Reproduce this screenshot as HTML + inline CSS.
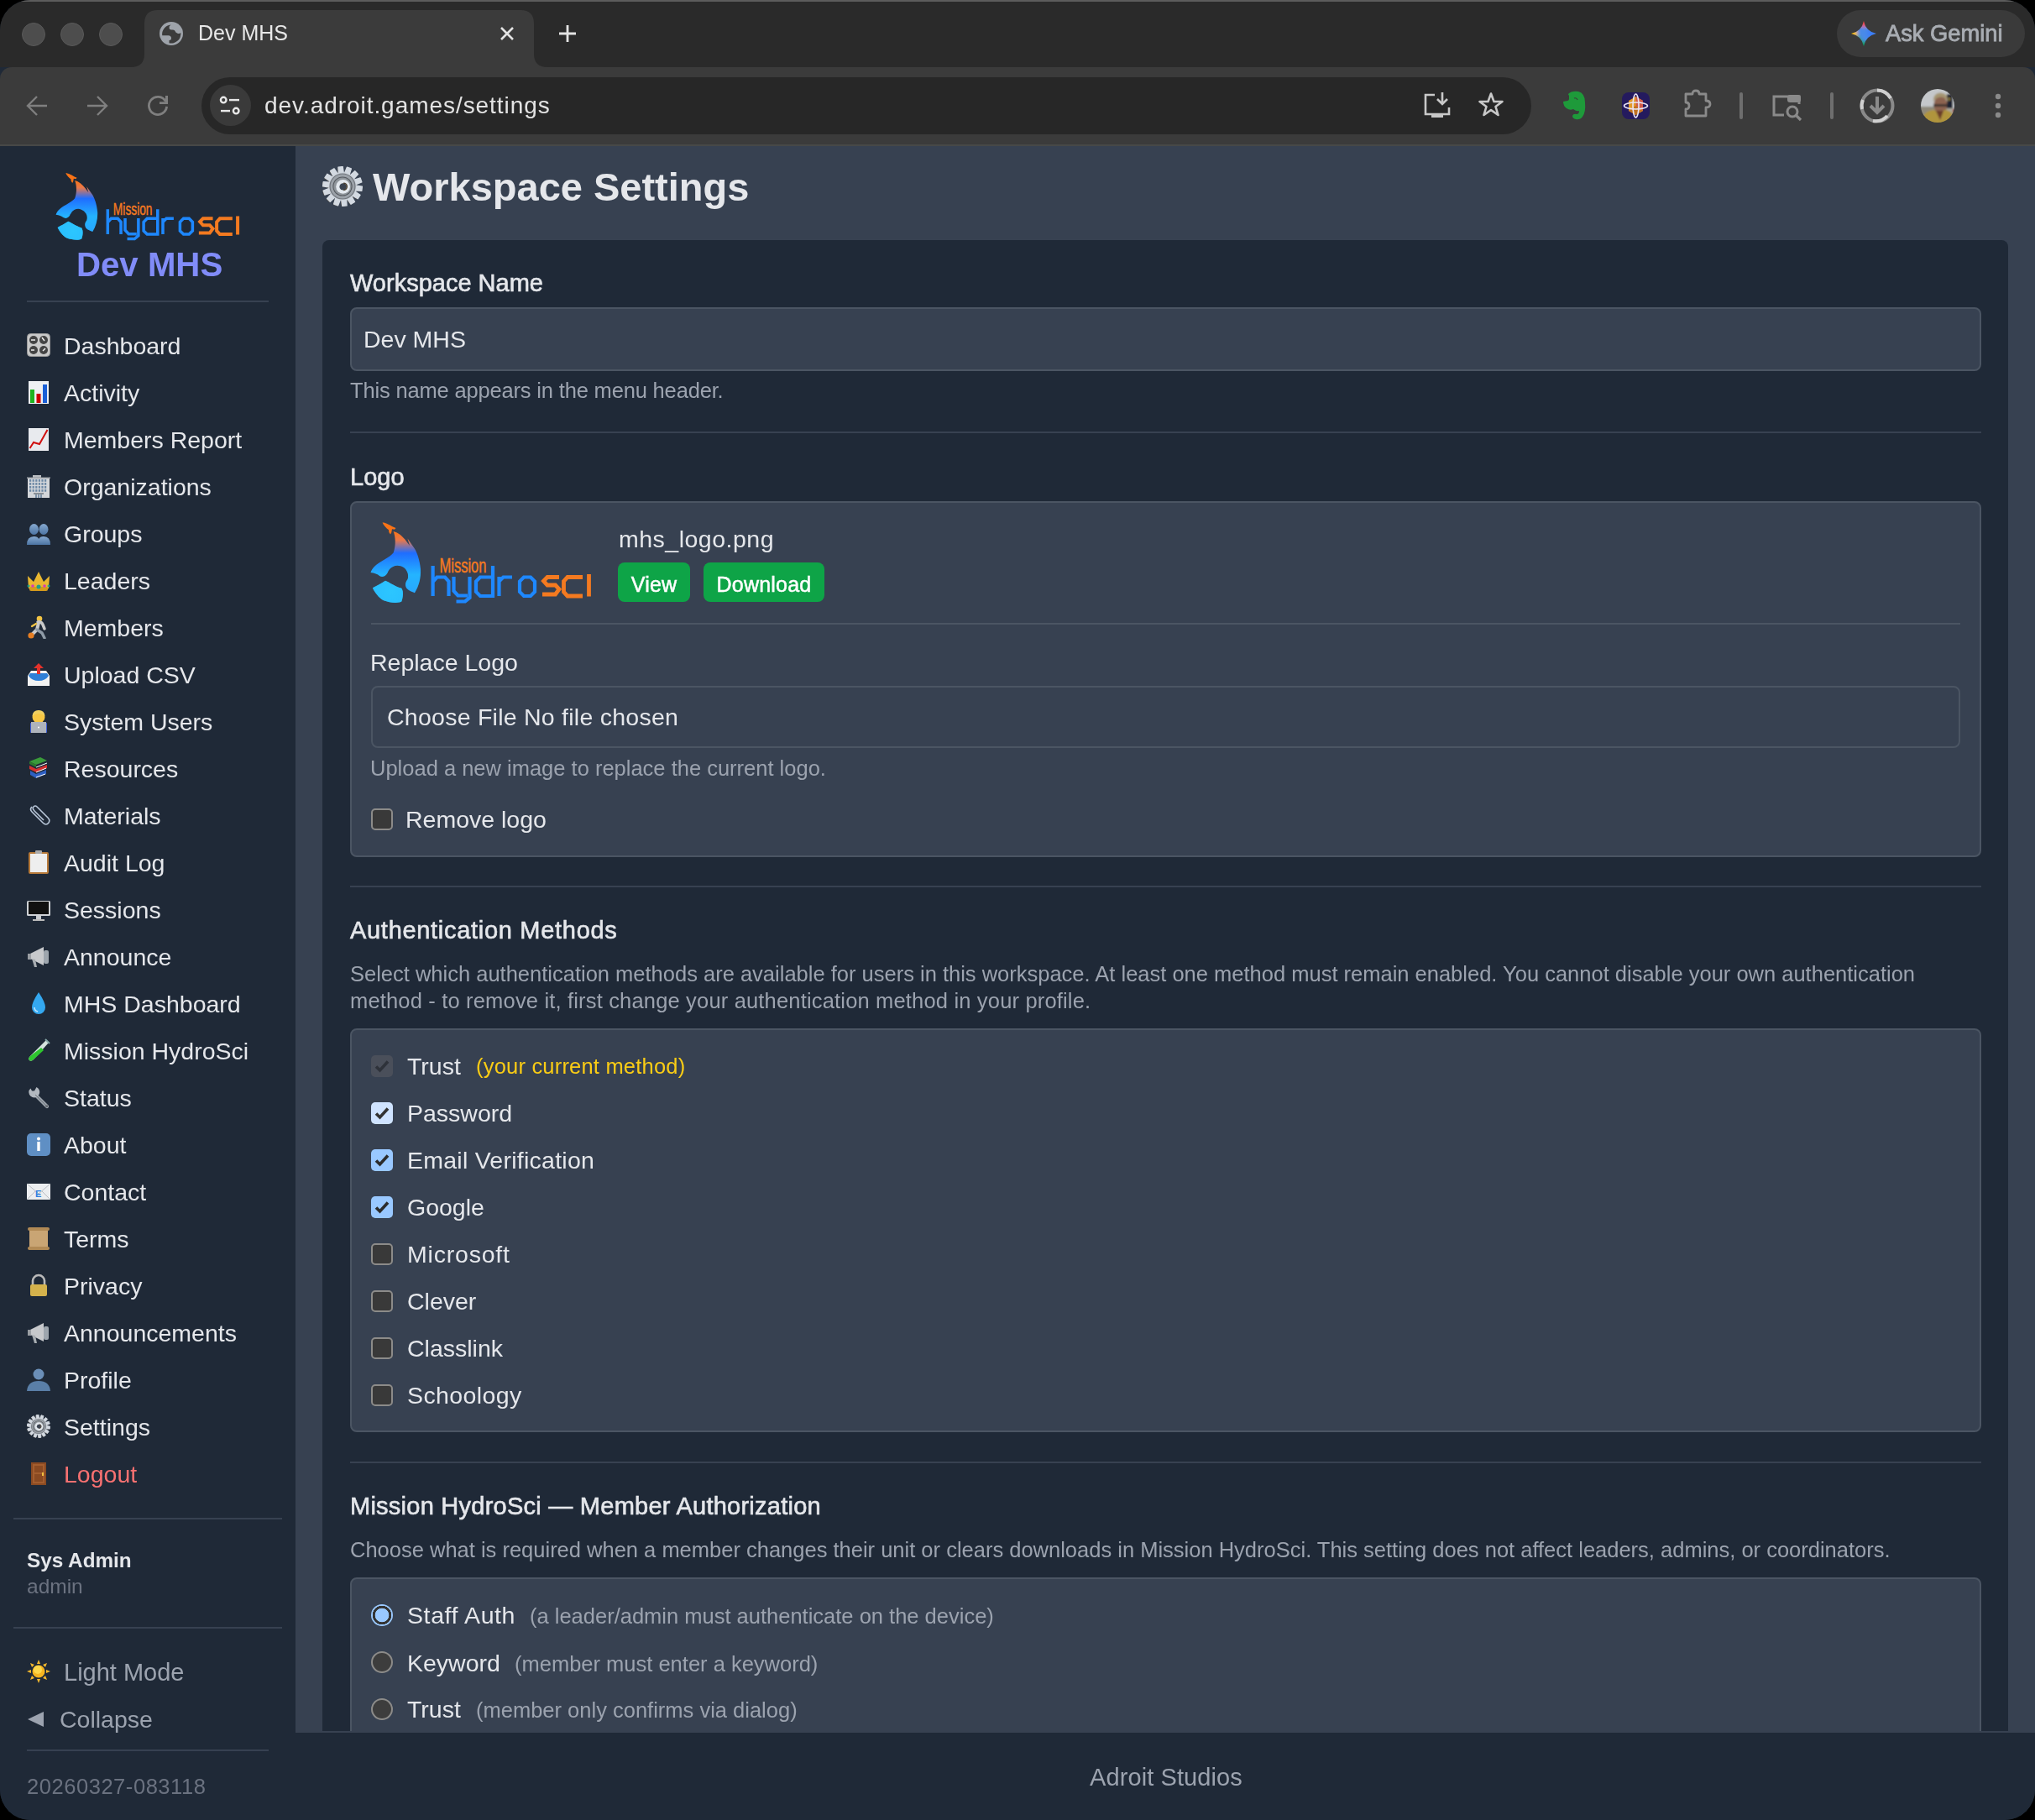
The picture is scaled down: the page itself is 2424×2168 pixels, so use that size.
<!DOCTYPE html>
<html><head><meta charset="utf-8">
<style>
*{box-sizing:border-box}
html,body{margin:0;padding:0}
body{width:2424px;height:2168px;background:#000;overflow:hidden;position:relative;font-family:"Liberation Sans",sans-serif;color:#e5e7eb}
.a{position:absolute}
.t{position:absolute;white-space:nowrap;line-height:1;will-change:transform}
.lbl{font-size:29px;color:#e5e7eb;-webkit-text-stroke:0.6px #e5e7eb}
.tx{font-size:28.5px;color:#e5e7eb}
.hp{font-size:25.5px;color:#9ca3af}
.btn{top:670px;height:47px;background:#0ea447;border-radius:8px;color:#fff;font-size:25px;line-height:52px;letter-spacing:0.2px;text-align:center;-webkit-text-stroke:0.5px #fff;will-change:transform}
.cb{width:26px;height:26px;border-radius:5px;background:#393939;border:2px solid #8c8b89}
.cb svg{position:absolute;left:-2px;top:-2px}
.cb.on{background:#99c8ff;border:none}
.cb.on svg{left:0;top:0}
.cb.lt{background:#cfe3ff}
.cb.dis{background:#4a4f5a;border:none}
.cb.dis svg{left:0;top:0}
.tl{top:27px;width:28px;height:28px;border-radius:50%;background:#4d4d4d;border:1px solid #5a5a5a}
.si{font-size:28.5px}
.rd{width:26px;height:26px;border-radius:50%;background:#3d3d3d;border:2px solid #8c8b89}
.rd.on{background:radial-gradient(circle at 50% 50%,#99c8ff 0,#99c8ff 8px,#333 8.6px,#333 11px,#99c8ff 11.5px);border:none}
#win{position:absolute;left:0;top:0;width:2424px;height:2168px;border-radius:36px;overflow:hidden;background:#1f2937}
</style></head><body>
<div id="win">
  <!-- tab strip -->
  <div class="a" style="left:0;top:0;width:2424px;height:80px;background:#2a2a2a"></div>
  <div class="a" style="left:0;top:0;width:2424px;height:2px;background:#5c5c5c"></div>
  <!-- traffic lights -->
  <div class="a tl" style="left:26px"></div>
  <div class="a tl" style="left:72px"></div>
  <div class="a tl" style="left:118px"></div>
  <!-- active tab -->
  <svg class="a" style="left:156px;top:12px" width="496" height="68" viewBox="0 0 496 68">
    <path d="M0 68 Q16 68 16 52 V16 Q16 0 32 0 H464 Q480 0 480 16 V52 Q480 68 496 68 Z" fill="#3b3b3b"/>
  </svg>
  <svg class="a" style="left:189px;top:25px" width="30" height="30" viewBox="0 0 30 30">
    <circle cx="15" cy="15" r="14" fill="#9ea3aa"/>
    <path d="M4.2 17.3 A11.4 11.4 0 0 1 14.5 4.5 Q12 6 12.5 8.5 Q13 11 16 10.5 Q19 10 19.5 12 Q20 14 23 15 Q25.5 15.5 26.3 13.8 A11.4 11.4 0 0 1 12.5 26.3 L12.5 23 Q15 23 15 20.5 Q15 17.5 11.5 17.2 Z" fill="#3b3b3b"/>
  </svg>
  <div class="t" style="left:236px;top:27px;font-size:25px;color:#e8e8e8">Dev MHS</div>
  <svg class="a" style="left:594px;top:30px" width="20" height="20" viewBox="0 0 20 20"><path d="M3 3 L17 17 M17 3 L3 17" stroke="#e3e3e3" stroke-width="2.6"/></svg>
  <svg class="a" style="left:665px;top:29px" width="22" height="22" viewBox="0 0 22 22"><path d="M11 1 V21 M1 11 H21" stroke="#e3e3e3" stroke-width="2.8"/></svg>
  <!-- toolbar -->
  <div class="a" style="left:0;top:80px;width:2424px;height:92px;background:#3b3b3b;border-radius:14px 14px 0 0"></div>
  <div class="a" style="left:0;top:172px;width:2424px;height:2px;background:#474847"></div>
  <svg class="a" style="left:30px;top:112px" width="180" height="30" viewBox="0 0 180 30">
    <g fill="none" stroke="#7f7f7f" stroke-width="2.4">
      <path d="M26 14 H4 M14 3 L3 14 L14 25"/>
      <path d="M74 14 H96 M86 3 L97 14 L86 25"/>
      <path d="M167.2 8.6 A10.6 10.6 0 1 0 168.6 14.9" stroke-width="2.8"/>
    </g>
    <path d="M167 2 H170 V12 H160 V9.2 H167Z" fill="#7f7f7f"/>
  </svg>
  <!-- url bar -->
  <div class="a" style="left:240px;top:92px;width:1584px;height:68px;border-radius:34px;background:#272727"></div>
  <div class="a" style="left:250px;top:101px;width:49px;height:49px;border-radius:50%;background:#3a3a3a"></div>
  <svg class="a" style="left:258px;top:110px" width="32" height="32" viewBox="0 0 32 32">
    <g fill="none" stroke="#e8e8e8" stroke-width="2.4">
      <circle cx="8.2" cy="9.1" r="3.3"/><path d="M15 9.1 H27"/>
      <circle cx="23.2" cy="22.1" r="3.3"/><path d="M5 22.1 H16"/>
    </g>
  </svg>
  <div class="t" style="left:315px;top:112px;font-size:28px;color:#e3e3e3;letter-spacing:0.95px">dev.adroit.games/settings</div>
  <svg class="a" style="left:1694px;top:108px" width="100" height="36" viewBox="0 0 100 36">
    <g fill="none" stroke="#c8c8c8" stroke-width="2.6">
      <path d="M15 5 H4 V28 H32 V20"/>
      <path d="M24 2 V16 M18 10 L24 16 L30 10"/>
    </g>
    <rect x="11" y="28" width="14" height="4" fill="#c8c8c8"/>
    <path d="M82 3.5 L85.5 13 H95.5 L87.5 19 L90.5 29 L82 23 L73.5 29 L76.5 19 L68.5 13 H78.5 Z" fill="none" stroke="#c8c8c8" stroke-width="2.6" stroke-linejoin="round"/>
  </svg>
  <!-- extension icons -->
  <svg class="a" style="left:1860px;top:108px" width="32" height="36" viewBox="0 0 32 36">
    <path d="M8 4 Q12 0 20 1 Q28 3 28 14 Q29 26 25 31 Q22 35 17 34 Q13 33 13 30 Q14 27 18 28 Q21 28 21 24 Q18 25 14 22 Q10 24 6 21 Q2 18 2 13 L7 12 Q9 12 9 9Z" fill="#1e9a3a"/>
    <path d="M4 10 H9 V5" fill="#3b3b3b"/>
    <path d="M15 9 Q18 8 19 11" stroke="#3b3b3b" stroke-width="1.2" fill="none"/>
  </svg>
  <svg class="a" style="left:1932px;top:110px" width="33" height="32" viewBox="0 0 33 32">
    <rect x="0" y="0" width="33" height="32" rx="8" fill="#241a5e"/>
    <path d="M16.5 5 L25 10 V22 L16.5 27 L8 22 V10Z" fill="#e39a2a"/>
    <path d="M16.5 5 L25 10 V22 L16.5 16Z" fill="#d25a4a"/>
    <path d="M8 22 L16.5 16 L25 22 L16.5 27Z" fill="#c07020"/>
    <ellipse cx="16.5" cy="16" rx="14" ry="4" fill="none" stroke="#e9e4f5" stroke-width="1.6"/>
    <ellipse cx="16.5" cy="16" rx="3.5" ry="14" fill="none" stroke="#e9e4f5" stroke-width="1.6"/>
  </svg>
  <svg class="a" style="left:2004px;top:106px" width="36" height="36" viewBox="0 0 36 36">
    <path d="M4 6 H12 Q12 2 16 2 Q20 2 20 6 H28 V14 Q33 14 33 18 Q33 22 28 22 V32 H4 V24 Q8 24 8 20 Q8 16 4 16 Z" fill="none" stroke="#8a8a8a" stroke-width="2.8" stroke-linejoin="round"/>
  </svg>
  <div class="a" style="left:2072px;top:110px;width:4px;height:32px;border-radius:2px;background:#6e6e6e"></div>
  <svg class="a" style="left:2109px;top:110px" width="40" height="36" viewBox="0 0 40 36">
    <path d="M16 27 H4 V5 H34 V14" fill="none" stroke="#8a8a8a" stroke-width="3"/>
    <rect x="20" y="3" width="16" height="9" rx="3" fill="#8a8a8a"/>
    <circle cx="26" cy="23" r="6" fill="none" stroke="#8a8a8a" stroke-width="3"/>
    <path d="M30 27 L36 33" stroke="#8a8a8a" stroke-width="3.2"/>
  </svg>
  <div class="a" style="left:2180px;top:110px;width:4px;height:32px;border-radius:2px;background:#6e6e6e"></div>
  <svg class="a" style="left:2214px;top:104px" width="44" height="44" viewBox="0 0 44 44">
    <circle cx="22" cy="22" r="18.5" fill="none" stroke="#8a8a8a" stroke-width="4"/>
    <path d="M22 3.5 A18.5 18.5 0 0 1 38 13" fill="none" stroke="#d0d0d0" stroke-width="4"/>
    <path d="M34 34 A18.5 18.5 0 0 1 17 40" fill="none" stroke="#d0d0d0" stroke-width="4"/>
    <path d="M4 26 A18.5 18.5 0 0 1 5 15" fill="none" stroke="#d0d0d0" stroke-width="4"/>
    <path d="M22 11 V29 M14 22 L22 30 L30 22" fill="none" stroke="#8a8a8a" stroke-width="4"/>
  </svg>
  <svg class="a" style="left:2288px;top:106px" width="40" height="40" viewBox="0 0 40 40">
    <defs><clipPath id="av"><circle cx="20" cy="20" r="20"/></clipPath><filter id="avb" x="-10%" y="-10%" width="120%" height="120%"><feGaussianBlur stdDeviation="0.9"/></filter></defs>
    <g clip-path="url(#av)"><g filter="url(#avb)">
      <rect x="-2" y="-2" width="44" height="44" fill="#c5c8cb"/>
      <rect x="-2" y="21" width="20" height="10" fill="#8f8a7c"/>
      <rect x="30" y="23" width="12" height="8" fill="#a9a69c"/>
      <rect x="31" y="6" width="7" height="17" fill="#1e2430"/>
      <rect x="33" y="10" width="2" height="4" fill="#8a7a30"/>
      <rect x="38" y="24" width="4" height="4" fill="#a03030"/>
      <ellipse cx="23.5" cy="19" rx="8" ry="11" fill="#8c6350"/>
      <path d="M14.5 15 Q15 4 24 4.5 Q33 5 32 16 Q30 10 24 9.5 Q18 10 14.5 15Z" fill="#a59672"/>
      <path d="M15 18 H32 V21 H15Z" fill="#2c2a2a" opacity="0.8"/>
      <path d="M-2 42 Q2 27 14 25 Q19 24 22 34 Q25 24 30 25 Q40 27 42 42Z" fill="#b0953e"/>
      <path d="M18 26 L23 37 L27 26Z" fill="#6b3c2c"/>
    </g></g>
  </svg>
  <svg class="a" style="left:2375px;top:111px" width="10" height="30" viewBox="0 0 10 30">
    <circle cx="5" cy="4" r="3.2" fill="#8a8a8a"/><circle cx="5" cy="15" r="3.2" fill="#8a8a8a"/><circle cx="5" cy="26" r="3.2" fill="#8a8a8a"/>
  </svg>
  <!-- gemini -->
  <div class="a" style="left:2188px;top:12px;width:224px;height:56px;border-radius:28px;background:#3a3a3a"></div>
  <svg class="a" style="left:2204px;top:24px" width="32" height="32" viewBox="0 0 32 32">
    <defs><clipPath id="gsc"><path d="M16 1 Q18.5 13.5 31 16 Q18.5 18.5 16 31 Q13.5 18.5 1 16 Q13.5 13.5 16 1Z"/></clipPath>
    <filter id="gbl" x="-20%" y="-20%" width="140%" height="140%"><feGaussianBlur stdDeviation="2.2"/></filter></defs>
    <g clip-path="url(#gsc)"><g filter="url(#gbl)">
      <rect x="0" y="0" width="32" height="32" fill="#4a8ae8"/>
      <circle cx="16" cy="1" r="7" fill="#f2453d"/>
      <circle cx="1" cy="16" r="7.5" fill="#fbbc04"/>
      <circle cx="8" cy="24" r="5" fill="#34a853"/>
      <circle cx="16" cy="31" r="6" fill="#0f9d58"/>
      <circle cx="28" cy="16" r="8" fill="#3d7ef5"/>
    </g></g>
  </svg>
  <div class="t" style="left:2246px;top:25.5px;font-size:27.3px;color:#a9adb3;-webkit-text-stroke:0.8px #a9adb3">Ask Gemini</div>

  <!-- sidebar -->
  <div class="a" style="left:0;top:174px;width:352px;height:1994px;background:#1f2937"></div>
  <svg class="a" style="left:62.2px;top:199.8px" width="228.2" height="91.6" viewBox="0 0 274 110"><defs><linearGradient id="flgs" x1="0" y1="18" x2="0" y2="104" gradientUnits="userSpaceOnUse"><stop offset="0" stop-color="#f97316"/><stop offset="0.12" stop-color="#e9784a"/><stop offset="0.3" stop-color="#1f6dff"/><stop offset="0.6" stop-color="#24b4ff"/><stop offset="1" stop-color="#2aa0ff"/></linearGradient>
<radialGradient id="flrs" cx="30" cy="90" r="40" gradientUnits="userSpaceOnUse"><stop offset="0" stop-color="#2cc6ff"/><stop offset="1" stop-color="#2cc6ff" stop-opacity="0"/></radialGradient></defs>
<path d="M19.5 7.5 C22 7 28 10 32 12.5 L35.5 14 L34 15.8 L31 15.2 L30.2 19.5 L29 21.5 L27.3 19 L27 16.3 C24 14 21 11 19.5 7.5 Z" fill="#f97316"/>
<path d="M32.6 18 C35 24 36 34 32.6 43.5 C28 49 18 53 12 58 C8 61 6 65 5.5 67 C10 67.5 14 69 16 71 C19 73 23 72 25.6 67.5 A12 12 0 0 1 49.5 75 C47 78 46 82 48.3 85.8 C51 89 55 90 58 91.2 C63 83 65.5 74 65 63 C64 52 61 44 58 38.7 L49.5 26.6 L52 35 C47 28 42 22 36.3 19.3 Z" fill="url(#flgs)"/>
<path d="M7.9 85.2 C12 83 18 80 23 76.7 C27 78 33 83 42.3 85.8 C45 90 44 97 42.3 101.5 C38 104 28 103 21 100.3 C15 97 10 90 7.9 85.2 Z" fill="#27b8ff"/>
<path d="M7.9 85.2 C12 83 18 80 23 76.7 C27 78 33 83 42.3 85.8 C45 90 44 97 42.3 101.5 C38 104 28 103 21 100.3 C15 97 10 90 7.9 85.2 Z" fill="url(#flrs)"/>
<text x="87.5" y="67.3" font-family="Liberation Sans" font-size="24.5" fill="#f47a20" stroke="#f47a20" stroke-width="0.5" textLength="56" lengthAdjust="spacingAndGlyphs">Mission</text>
<g fill="none" stroke="#1e88ff" stroke-width="4.2" stroke-linejoin="miter">
<path d="M79.6 59 V95 M79.6 78 L84.5 72.5 H94 L98.5 77.5 V95"/>
<path d="M104.5 72 V89 L109.5 94.5 H121 M123.5 72 V97 L118 101.5 H107.5"/>
<path d="M151 59 V95 H136 L131 90 V77.5 L136 72.5 H151"/>
<path d="M158.5 72 V95 M158.5 77.5 L163.5 72.5 H174"/>
<path d="M188 72.5 H196 L201 77.5 V90 L196 95 H188 L183 90 V77.5 Z"/>
</g>
<g fill="none" stroke="#f47a20" stroke-width="4.8" stroke-linejoin="miter">
<path d="M230 72.5 H216 L211.5 77 L216 82 H225.5 L230 87 L225.5 93 H210"/>
<path d="M258 72.5 H240 L235.5 77.5 V90 L240 95 H258"/>
<path d="M265.5 69 V95.5"/>
</g></svg>
  <div class="t" style="left:91px;top:296px;font-size:40.2px;font-weight:bold;color:#818cf8">Dev MHS</div>
  <div class="a" style="left:32px;top:358px;width:288px;height:2px;background:#374151"></div>
  <svg class="a" style="left:32px;top:397px" width="28" height="28" viewBox="0 0 28 28"><rect x="0.5" y="0.5" width="27" height="27" rx="4" fill="#c9c9c9" stroke="#9a9a9a"/><circle cx="8" cy="8" r="5" fill="#444"/><circle cx="20" cy="8" r="5" fill="#444"/><circle cx="8" cy="20" r="5" fill="#444"/><circle cx="20" cy="20" r="5" fill="#444"/><path d="M5 8h5M18 5l3 4M5 20h4M19 21l3-3" stroke="#eee" stroke-width="1.5"/></svg>
  <div class="t si" style="left:76px;top:397.7px;color:#e5e7eb">Dashboard</div>
  <svg class="a" style="left:32px;top:453px" width="28" height="28" viewBox="0 0 28 28"><rect x="2" y="1" width="24" height="27" fill="#eef0f3"/><rect x="4" y="11" width="5" height="16" fill="#1fb41f"/><rect x="11.5" y="16" width="5" height="11" fill="#c00"/><rect x="19" y="5" width="5" height="22" fill="#1a5fd6"/></svg>
  <div class="t si" style="left:76px;top:453.7px;color:#e5e7eb">Activity</div>
  <svg class="a" style="left:32px;top:509px" width="28" height="28" viewBox="0 0 28 28"><rect x="2" y="1" width="24" height="27" fill="#e8eaee"/><path d="M3.5 25 L8 18 L15 20 L24.5 3" fill="none" stroke="#d01010" stroke-width="2"/></svg>
  <div class="t si" style="left:76px;top:509.7px;color:#e5e7eb">Members Report</div>
  <svg class="a" style="left:32px;top:565px" width="28" height="28" viewBox="0 0 28 28"><rect x="1" y="4" width="26" height="24" fill="#d3d6da"/><rect x="7" y="1" width="10" height="3" fill="#b9bcc0"/><rect x="0" y="3.5" width="28" height="1.5" fill="#9da2a8"/><g fill="#6f8aa6"><rect x="3.0" y="6" width="2.2" height="2.8"/><rect x="6.6" y="6" width="2.2" height="2.8"/><rect x="10.2" y="6" width="2.2" height="2.8"/><rect x="13.8" y="6" width="2.2" height="2.8"/><rect x="17.4" y="6" width="2.2" height="2.8"/><rect x="21.0" y="6" width="2.2" height="2.8"/><rect x="3.0" y="10" width="2.2" height="2.8"/><rect x="6.6" y="10" width="2.2" height="2.8"/><rect x="10.2" y="10" width="2.2" height="2.8"/><rect x="13.8" y="10" width="2.2" height="2.8"/><rect x="17.4" y="10" width="2.2" height="2.8"/><rect x="21.0" y="10" width="2.2" height="2.8"/><rect x="3.0" y="14" width="2.2" height="2.8"/><rect x="6.6" y="14" width="2.2" height="2.8"/><rect x="10.2" y="14" width="2.2" height="2.8"/><rect x="13.8" y="14" width="2.2" height="2.8"/><rect x="17.4" y="14" width="2.2" height="2.8"/><rect x="21.0" y="14" width="2.2" height="2.8"/><rect x="3.0" y="18" width="2.2" height="2.8"/><rect x="6.6" y="18" width="2.2" height="2.8"/><rect x="10.2" y="18" width="2.2" height="2.8"/><rect x="13.8" y="18" width="2.2" height="2.8"/><rect x="17.4" y="18" width="2.2" height="2.8"/><rect x="21.0" y="18" width="2.2" height="2.8"/></g><rect x="8" y="22" width="12" height="2" fill="#8a9097"/><g fill="#7d93aa"><rect x="10" y="24" width="2" height="4"/><rect x="13" y="24" width="2" height="4"/><rect x="16" y="24" width="2" height="4"/></g></svg>
  <div class="t si" style="left:76px;top:565.7px;color:#e5e7eb">Organizations</div>
  <svg class="a" style="left:32px;top:621px" width="28" height="28" viewBox="0 0 28 28"><defs><linearGradient id="gpg" x1="0" y1="0" x2="0" y2="1"><stop offset="0" stop-color="#86a9d0"/><stop offset="1" stop-color="#4c74a3"/></linearGradient></defs><g fill="url(#gpg)"><ellipse cx="8.5" cy="9.5" rx="5.5" ry="6.5"/><ellipse cx="20" cy="9.5" rx="5.5" ry="6.5"/><path d="M0 28 Q0 18 8.5 18 Q13 18 14.2 21 Q15.5 18 20 18 Q28 18 28 28Z"/></g></svg>
  <div class="t si" style="left:76px;top:621.7px;color:#e5e7eb">Groups</div>
  <svg class="a" style="left:32px;top:677px" width="28" height="28" viewBox="0 0 28 28"><path d="M2 24 L1 9 L8 16 L14 4 L20 16 L27 9 L26 24Z" fill="#e9b730"/><rect x="3" y="22" width="22" height="5" rx="2" fill="#d49a1c"/><circle cx="14" cy="22" r="2.5" fill="#1ea087"/><circle cx="7" cy="21" r="1.8" fill="#d63ab8"/><circle cx="21" cy="21" r="1.8" fill="#d63ab8"/><circle cx="2" cy="21" r="1.5" fill="#1ea087"/><circle cx="26" cy="21" r="1.5" fill="#1ea087"/></svg>
  <div class="t si" style="left:76px;top:677.7px;color:#e5e7eb">Leaders</div>
  <svg class="a" style="left:32px;top:733px" width="28" height="28" viewBox="0 0 28 28"><circle cx="15" cy="4" r="3.3" fill="#f2c445"/><path d="M13 8 Q17 7 19 11 L21 16" stroke="#c9c9c9" stroke-width="3.5" fill="none" stroke-linecap="round"/><path d="M14 9 L12 17 L7 22" stroke="#c9c9c9" stroke-width="4" fill="none" stroke-linecap="round"/><path d="M12 17 L18 21 L21 27" stroke="#8e9aa6" stroke-width="3.4" fill="none" stroke-linecap="round"/><path d="M11 10 L6 13" stroke="#f2c445" stroke-width="2.4" stroke-linecap="round"/><circle cx="5" cy="24" r="3.6" fill="#e67e22"/></svg>
  <div class="t si" style="left:76px;top:733.7px;color:#e5e7eb">Members</div>
  <svg class="a" style="left:32px;top:789px" width="28" height="28" viewBox="0 0 28 28"><path d="M1 16 L5 10 H23 L27 16 V28 H1Z" fill="#f2f2f2"/><path d="M4 13 H24 L26 16 Q22 22 14 22 Q6 22 2 16Z" fill="#2f7fd6"/><path d="M14 1 L20 7 H16 V14 H12 V7 H8Z" fill="#e4322b"/></svg>
  <div class="t si" style="left:76px;top:789.7px;color:#e5e7eb">Upload CSV</div>
  <svg class="a" style="left:32px;top:845px" width="28" height="28" viewBox="0 0 28 28"><circle cx="14" cy="9" r="7.5" fill="#f7c743"/><path d="M6.5 8 Q7 1 14 1 Q21 1 21.5 8 Q18 5 14 5 Q10 5 6.5 8Z" fill="#f0d060"/><rect x="4" y="16" width="20" height="12" rx="1" fill="#3b5bd6"/><rect x="5" y="15" width="18" height="13" fill="#aeb3bb"/><circle cx="14" cy="21.5" r="1" fill="#fff"/></svg>
  <div class="t si" style="left:76px;top:845.7px;color:#e5e7eb">System Users</div>
  <svg class="a" style="left:32px;top:901px" width="28" height="28" viewBox="0 0 28 28"><path d="M3 6 L16 1 L24 5 L11 10Z" fill="#3a9a3a"/><path d="M3 6 L11 10 L11 13 L3 9Z" fill="#2c7a2c"/><path d="M3 11 L11 15 L24 10 L24 14 L11 19 L3 15Z" fill="#d43030"/><path d="M4 17 L11 21 L23 16 L23 21 L11 26 L4 22Z" fill="#2e5fc2"/><path d="M11 13 L24 8 M11 19 L23 14 M11 25 L22 21" stroke="#fff" stroke-width="1"/></svg>
  <div class="t si" style="left:76px;top:901.7px;color:#e5e7eb">Resources</div>
  <svg class="a" style="left:32px;top:957px" width="28" height="28" viewBox="0 0 28 28"><path d="M6 4 Q3 7 6 10 L19 23 Q23 27 26 23 Q28 20 25 17 L12 4 Q10 2 8 4 Q6 6 9 9 L20 20" fill="none" stroke="#b8c6d8" stroke-width="1.6"/></svg>
  <div class="t si" style="left:76px;top:957.7px;color:#e5e7eb">Materials</div>
  <svg class="a" style="left:32px;top:1013px" width="28" height="28" viewBox="0 0 28 28"><rect x="2" y="2" width="24" height="26" rx="2" fill="#b77a3a"/><rect x="4" y="4" width="20" height="22" fill="#eee"/><rect x="10" y="0" width="8" height="4" rx="1" fill="#aaa"/></svg>
  <div class="t si" style="left:76px;top:1013.7px;color:#e5e7eb">Audit Log</div>
  <svg class="a" style="left:32px;top:1069px" width="28" height="28" viewBox="0 0 28 28"><rect x="0" y="4" width="28" height="18" rx="1.5" fill="#cfd2d6"/><rect x="2" y="5" width="24" height="15" fill="#111"/><rect x="11" y="22" width="6" height="4" fill="#c9ccd0"/><rect x="7" y="26" width="14" height="2" fill="#bbb"/></svg>
  <div class="t si" style="left:76px;top:1069.7px;color:#e5e7eb">Sessions</div>
  <svg class="a" style="left:32px;top:1125px" width="28" height="28" viewBox="0 0 28 28"><path d="M2 12 L20 3 V25 L2 16Z" fill="#c7c9cc"/><rect x="1" y="11" width="4" height="7" fill="#9a9ea3"/><rect x="20" y="7" width="6" height="16" rx="2" fill="#9ea6ae"/><path d="M6 17 L9 27 H12 L10 18" fill="#a8adb2"/></svg>
  <div class="t si" style="left:76px;top:1125.7px;color:#e5e7eb">Announce</div>
  <svg class="a" style="left:32px;top:1181px" width="28" height="28" viewBox="0 0 28 28"><path d="M14 1 Q22 13 22 19 A8 8 0 0 1 6 19 Q6 13 14 1Z" fill="#34a8f0"/><path d="M9 19 Q9 23 13 24" stroke="#bfe6ff" stroke-width="1.6" fill="none"/></svg>
  <div class="t si" style="left:76px;top:1181.7px;color:#e5e7eb">MHS Dashboard</div>
  <svg class="a" style="left:32px;top:1237px" width="28" height="28" viewBox="0 0 28 28"><path d="M23 2 L26 5 L8 25 Q5 28 3 26 Q1 24 4 21Z" fill="#d6e3df"/><path d="M17 11 L20 14 L8 25 Q5 28 3 26 Q1 24 4 21Z" fill="#2ec52e"/><path d="M22 1 L27 6" stroke="#8aa" stroke-width="2"/></svg>
  <div class="t si" style="left:76px;top:1237.7px;color:#e5e7eb">Mission HydroSci</div>
  <svg class="a" style="left:32px;top:1293px" width="28" height="28" viewBox="0 0 28 28"><path d="M8.5 9.5 L24 25" stroke="#9aa1a9" stroke-width="4.2" stroke-linecap="round"/><path d="M2.5 6 A6.5 6.5 0 1 0 11.5 2 L9 6.5 L6 6.5 L4.5 3.5 Z" fill="#b3b9c0"/><circle cx="23.6" cy="24.6" r="1.2" fill="#3b3f45"/><path d="M10 11 L24 25" stroke="#6f767e" stroke-width="1"/></svg>
  <div class="t si" style="left:76px;top:1293.7px;color:#e5e7eb">Status</div>
  <svg class="a" style="left:32px;top:1349px" width="28" height="28" viewBox="0 0 28 28"><rect x="0" y="1" width="28" height="27" rx="5" fill="#5f8fc4"/><circle cx="14" cy="7.5" r="2" fill="#fff"/><rect x="12.3" y="11" width="3.4" height="11" fill="#fff"/></svg>
  <div class="t si" style="left:76px;top:1349.7px;color:#e5e7eb">About</div>
  <svg class="a" style="left:32px;top:1405px" width="28" height="28" viewBox="0 0 28 28"><rect x="0" y="5" width="28" height="19" fill="#eceef0"/><path d="M0 5 L14 17 L28 5 M0 24 L10 14 M28 24 L18 14" stroke="#b9bdc2" stroke-width="1" fill="none"/><text x="10" y="21" font-size="11" font-weight="bold" font-family="Liberation Sans" fill="#2c7ee0">E</text></svg>
  <div class="t si" style="left:76px;top:1405.7px;color:#e5e7eb">Contact</div>
  <svg class="a" style="left:32px;top:1461px" width="28" height="28" viewBox="0 0 28 28"><rect x="3" y="2" width="22" height="24" fill="#c9a574"/><rect x="1" y="1" width="26" height="4" rx="2" fill="#b18a55"/><rect x="1" y="24" width="26" height="4" rx="2" fill="#b18a55"/></svg>
  <div class="t si" style="left:76px;top:1461.7px;color:#e5e7eb">Terms</div>
  <svg class="a" style="left:32px;top:1517px" width="28" height="28" viewBox="0 0 28 28"><path d="M7 14 V9 A7 7 0 0 1 21 9 V14" fill="none" stroke="#b9b9b9" stroke-width="2.6"/><rect x="4" y="13" width="20" height="14" rx="2" fill="#d4b24c"/></svg>
  <div class="t si" style="left:76px;top:1517.7px;color:#e5e7eb">Privacy</div>
  <svg class="a" style="left:32px;top:1573px" width="28" height="28" viewBox="0 0 28 28"><path d="M2 12 L20 3 V25 L2 16Z" fill="#c7c9cc"/><rect x="1" y="11" width="4" height="7" fill="#9a9ea3"/><rect x="20" y="7" width="6" height="16" rx="2" fill="#9ea6ae"/><path d="M6 17 L9 27 H12 L10 18" fill="#a8adb2"/></svg>
  <div class="t si" style="left:76px;top:1573.7px;color:#e5e7eb">Announcements</div>
  <svg class="a" style="left:32px;top:1629px" width="28" height="28" viewBox="0 0 28 28"><circle cx="14" cy="8" r="6.5" fill="#6b8fb8"/><path d="M0 28 Q1 16 14 16 Q27 16 28 28Z" fill="#5a7fa8"/></svg>
  <div class="t si" style="left:76px;top:1629.7px;color:#e5e7eb">Profile</div>
  <svg class="a" style="left:32px;top:1685px" width="28" height="28" viewBox="-24 -24 48 48">
    <path d="M15.46 -1.10 L23.40 0.18 L22.77 5.38 L14.76 4.74 L14.41 5.72 L21.00 10.32 L18.18 14.73 L11.24 10.67 L10.50 11.41 L14.45 18.41 L9.99 21.16 L5.50 14.49 L4.51 14.83 L5.03 22.85 L-0.18 23.40 L-1.34 15.44 L-2.37 15.32 L-5.38 22.77 L-10.32 21.00 L-7.90 13.33 L-8.78 12.77 L-14.73 18.18 L-18.41 14.45 L-12.91 8.58 L-13.45 7.70 L-21.16 9.99 L-22.85 5.03 L-15.35 2.13 L-15.46 1.10 L-23.40 -0.18 L-22.77 -5.38 L-14.76 -4.74 L-14.41 -5.72 L-21.00 -10.32 L-18.18 -14.73 L-11.24 -10.67 L-10.50 -11.41 L-14.45 -18.41 L-9.99 -21.16 L-5.50 -14.49 L-4.51 -14.83 L-5.03 -22.85 L0.18 -23.40 L1.34 -15.44 L2.37 -15.32 L5.38 -22.77 L10.32 -21.00 L7.90 -13.33 L8.78 -12.77 L14.73 -18.18 L18.41 -14.45 L12.91 -8.58 L13.45 -7.70 L21.16 -9.99 L22.85 -5.03 L15.35 -2.13Z" fill="#5f574b" transform="translate(-0.9 0.7)"/>
    <path d="M15.46 -1.10 L23.40 0.18 L22.77 5.38 L14.76 4.74 L14.41 5.72 L21.00 10.32 L18.18 14.73 L11.24 10.67 L10.50 11.41 L14.45 18.41 L9.99 21.16 L5.50 14.49 L4.51 14.83 L5.03 22.85 L-0.18 23.40 L-1.34 15.44 L-2.37 15.32 L-5.38 22.77 L-10.32 21.00 L-7.90 13.33 L-8.78 12.77 L-14.73 18.18 L-18.41 14.45 L-12.91 8.58 L-13.45 7.70 L-21.16 9.99 L-22.85 5.03 L-15.35 2.13 L-15.46 1.10 L-23.40 -0.18 L-22.77 -5.38 L-14.76 -4.74 L-14.41 -5.72 L-21.00 -10.32 L-18.18 -14.73 L-11.24 -10.67 L-10.50 -11.41 L-14.45 -18.41 L-9.99 -21.16 L-5.50 -14.49 L-4.51 -14.83 L-5.03 -22.85 L0.18 -23.40 L1.34 -15.44 L2.37 -15.32 L5.38 -22.77 L10.32 -21.00 L7.90 -13.33 L8.78 -12.77 L14.73 -18.18 L18.41 -14.45 L12.91 -8.58 L13.45 -7.70 L21.16 -9.99 L22.85 -5.03 L15.35 -2.13Z" fill="#d3d9e1" stroke="#d3d9e1" stroke-width="1.4" stroke-linejoin="round"/>
    <circle r="16.6" fill="#ccd2da"/>
    <circle r="15.6" fill="#70757c"/>
    <circle r="14.4" fill="#9ca2a9"/>
    <circle r="11.6" fill="#55595f"/>
    <circle r="10.6" fill="#8f959b"/>
    <circle cx="0.6" cy="0.4" r="8.4" fill="#e3e8ee"/>
    <circle cx="0.6" cy="0.4" r="4.2" fill="#3b4350"/>
    <path d="M1.2 -3.8 A4 4 0 0 1 1.2 4.4" fill="none" stroke="#4a3e2e" stroke-width="1.5"/>
  </svg>
  <div class="t si" style="left:76px;top:1685.7px;color:#e5e7eb">Settings</div>
  <svg class="a" style="left:32px;top:1741px" width="28" height="28" viewBox="0 0 28 28"><rect x="5" y="1" width="18" height="27" fill="#8a4a22"/><rect x="7" y="3" width="14" height="23" fill="#a35d2e"/><rect x="9" y="5" width="10" height="8" fill="#8a4a22"/><rect x="9" y="15" width="10" height="9" fill="#8a4a22"/><rect x="18" y="13" width="2" height="4" fill="#f0c040"/></svg>
  <div class="t si" style="left:76px;top:1741.7px;color:#f87171">Logout</div>
  <div class="a" style="left:16px;top:1808px;width:320px;height:2px;background:#374151"></div>
  <div class="t" style="left:32px;top:1846.5px;font-size:24.3px;font-weight:bold;color:#e5e7eb">Sys Admin</div>
  <div class="t" style="left:32px;top:1877.5px;font-size:24.5px;color:#6b7280">admin</div>
  <div class="a" style="left:16px;top:1938px;width:320px;height:2px;background:#374151"></div>
  <svg class="a" style="left:32px;top:1977px" width="28" height="28" viewBox="0 0 28 28">
    <g fill="#f5b82e"><path d="M14 0 L16 5 H12Z"/><path d="M14 28 L16 23 H12Z"/><path d="M0 14 L5 12 V16Z"/><path d="M28 14 L23 12 V16Z"/><path d="M4 4 L9 6 L6 9Z"/><path d="M24 4 L22 9 L19 6Z"/><path d="M4 24 L6 19 L9 22Z"/><path d="M24 24 L19 22 L22 19Z"/></g>
    <circle cx="14" cy="14" r="7.5" fill="#f7b520"/><circle cx="13" cy="12" r="5" fill="#ffd84a"/>
  </svg>
  <div class="t" style="left:76px;top:1978px;font-size:29px;color:#9ca3af">Light Mode</div>
  <svg class="a" style="left:33px;top:2039px" width="19" height="18" viewBox="0 0 19 18"><path d="M0 9 L19 0 V18Z" fill="#9ca3af"/></svg>
  <div class="t" style="left:71px;top:2033.8px;font-size:28.5px;color:#9ca3af">Collapse</div>
  <div class="a" style="left:32px;top:2084px;width:288px;height:2px;background:#374151"></div>
  <div class="t" style="left:32px;top:2116px;font-size:25.5px;color:#6b7280;letter-spacing:0.55px">20260327-083118</div>

  <!-- main -->
  <div class="a" style="left:352px;top:2064px;width:2072px;height:104px;background:#1f2937"></div>
  <div class="t" style="left:1298px;top:2103px;font-size:29px;color:#9ca3af;letter-spacing:0.1px">Adroit Studios</div>
  <div class="a" style="left:352px;top:2062px;width:2072px;height:2px;background:#374151"></div>
  <div class="a" style="left:352px;top:174px;width:2072px;height:1888px;background:#374151;overflow:hidden">
  <div class="a" style="left:-352px;top:-174px;width:2424px;height:2168px">

  <!-- title -->
  <svg class="a" style="left:384px;top:198px" width="48" height="48" viewBox="-24 -24 48 48">
    <path d="M15.46 -1.10 L23.40 0.18 L22.77 5.38 L14.76 4.74 L14.41 5.72 L21.00 10.32 L18.18 14.73 L11.24 10.67 L10.50 11.41 L14.45 18.41 L9.99 21.16 L5.50 14.49 L4.51 14.83 L5.03 22.85 L-0.18 23.40 L-1.34 15.44 L-2.37 15.32 L-5.38 22.77 L-10.32 21.00 L-7.90 13.33 L-8.78 12.77 L-14.73 18.18 L-18.41 14.45 L-12.91 8.58 L-13.45 7.70 L-21.16 9.99 L-22.85 5.03 L-15.35 2.13 L-15.46 1.10 L-23.40 -0.18 L-22.77 -5.38 L-14.76 -4.74 L-14.41 -5.72 L-21.00 -10.32 L-18.18 -14.73 L-11.24 -10.67 L-10.50 -11.41 L-14.45 -18.41 L-9.99 -21.16 L-5.50 -14.49 L-4.51 -14.83 L-5.03 -22.85 L0.18 -23.40 L1.34 -15.44 L2.37 -15.32 L5.38 -22.77 L10.32 -21.00 L7.90 -13.33 L8.78 -12.77 L14.73 -18.18 L18.41 -14.45 L12.91 -8.58 L13.45 -7.70 L21.16 -9.99 L22.85 -5.03 L15.35 -2.13Z" fill="#5f574b" transform="translate(-0.9 0.7)"/>
    <path d="M15.46 -1.10 L23.40 0.18 L22.77 5.38 L14.76 4.74 L14.41 5.72 L21.00 10.32 L18.18 14.73 L11.24 10.67 L10.50 11.41 L14.45 18.41 L9.99 21.16 L5.50 14.49 L4.51 14.83 L5.03 22.85 L-0.18 23.40 L-1.34 15.44 L-2.37 15.32 L-5.38 22.77 L-10.32 21.00 L-7.90 13.33 L-8.78 12.77 L-14.73 18.18 L-18.41 14.45 L-12.91 8.58 L-13.45 7.70 L-21.16 9.99 L-22.85 5.03 L-15.35 2.13 L-15.46 1.10 L-23.40 -0.18 L-22.77 -5.38 L-14.76 -4.74 L-14.41 -5.72 L-21.00 -10.32 L-18.18 -14.73 L-11.24 -10.67 L-10.50 -11.41 L-14.45 -18.41 L-9.99 -21.16 L-5.50 -14.49 L-4.51 -14.83 L-5.03 -22.85 L0.18 -23.40 L1.34 -15.44 L2.37 -15.32 L5.38 -22.77 L10.32 -21.00 L7.90 -13.33 L8.78 -12.77 L14.73 -18.18 L18.41 -14.45 L12.91 -8.58 L13.45 -7.70 L21.16 -9.99 L22.85 -5.03 L15.35 -2.13Z" fill="#d3d9e1" stroke="#d3d9e1" stroke-width="1.4" stroke-linejoin="round"/>
    <circle r="16.6" fill="#ccd2da"/>
    <circle r="15.6" fill="#70757c"/>
    <circle r="14.4" fill="#9ca2a9"/>
    <circle r="11.6" fill="#55595f"/>
    <circle r="10.6" fill="#8f959b"/>
    <circle cx="0.6" cy="0.4" r="8.4" fill="#e3e8ee"/>
    <circle cx="0.6" cy="0.4" r="4.2" fill="#3b4350"/>
    <path d="M1.2 -3.8 A4 4 0 0 1 1.2 4.4" fill="none" stroke="#4a3e2e" stroke-width="1.5"/>
  </svg>
  <div class="t" style="left:444px;top:199px;font-size:47px;font-weight:bold;color:#e5e7eb">Workspace Settings</div>
  <!-- card -->
  <div class="a" style="left:384px;top:286px;width:2008px;height:1900px;background:#1f2937;border-radius:8px"></div>

  <div class="t lbl" style="left:417px;top:323px">Workspace Name</div>
  <div class="a" style="left:417px;top:366px;width:1943px;height:76px;background:#374151;border:2px solid #4b5563;border-radius:8px"></div>
  <div class="t tx" style="left:433px;top:390px">Dev MHS</div>
  <div class="t hp" style="left:417px;top:453px;letter-spacing:-0.17px">This name appears in the menu header.</div>
  <div class="a" style="left:417px;top:514px;width:1943px;height:2px;background:#374151"></div>

  <div class="t lbl" style="left:417px;top:554px">Logo</div>
  <div class="a" style="left:417px;top:597px;width:1943px;height:424px;background:#374151;border:2px solid #4b5563;border-radius:8px"></div>
  <svg class="a" style="left:436px;top:615px" width="274" height="110" viewBox="0 0 274 110"><defs><linearGradient id="flgc" x1="0" y1="18" x2="0" y2="104" gradientUnits="userSpaceOnUse"><stop offset="0" stop-color="#f97316"/><stop offset="0.12" stop-color="#e9784a"/><stop offset="0.3" stop-color="#1f6dff"/><stop offset="0.6" stop-color="#24b4ff"/><stop offset="1" stop-color="#2aa0ff"/></linearGradient>
<radialGradient id="flrc" cx="30" cy="90" r="40" gradientUnits="userSpaceOnUse"><stop offset="0" stop-color="#2cc6ff"/><stop offset="1" stop-color="#2cc6ff" stop-opacity="0"/></radialGradient></defs>
<path d="M19.5 7.5 C22 7 28 10 32 12.5 L35.5 14 L34 15.8 L31 15.2 L30.2 19.5 L29 21.5 L27.3 19 L27 16.3 C24 14 21 11 19.5 7.5 Z" fill="#f97316"/>
<path d="M32.6 18 C35 24 36 34 32.6 43.5 C28 49 18 53 12 58 C8 61 6 65 5.5 67 C10 67.5 14 69 16 71 C19 73 23 72 25.6 67.5 A12 12 0 0 1 49.5 75 C47 78 46 82 48.3 85.8 C51 89 55 90 58 91.2 C63 83 65.5 74 65 63 C64 52 61 44 58 38.7 L49.5 26.6 L52 35 C47 28 42 22 36.3 19.3 Z" fill="url(#flgc)"/>
<path d="M7.9 85.2 C12 83 18 80 23 76.7 C27 78 33 83 42.3 85.8 C45 90 44 97 42.3 101.5 C38 104 28 103 21 100.3 C15 97 10 90 7.9 85.2 Z" fill="#27b8ff"/>
<path d="M7.9 85.2 C12 83 18 80 23 76.7 C27 78 33 83 42.3 85.8 C45 90 44 97 42.3 101.5 C38 104 28 103 21 100.3 C15 97 10 90 7.9 85.2 Z" fill="url(#flrc)"/>
<text x="87.5" y="67.3" font-family="Liberation Sans" font-size="24.5" fill="#f47a20" stroke="#f47a20" stroke-width="0.5" textLength="56" lengthAdjust="spacingAndGlyphs">Mission</text>
<g fill="none" stroke="#1e88ff" stroke-width="4.2" stroke-linejoin="miter">
<path d="M79.6 59 V95 M79.6 78 L84.5 72.5 H94 L98.5 77.5 V95"/>
<path d="M104.5 72 V89 L109.5 94.5 H121 M123.5 72 V97 L118 101.5 H107.5"/>
<path d="M151 59 V95 H136 L131 90 V77.5 L136 72.5 H151"/>
<path d="M158.5 72 V95 M158.5 77.5 L163.5 72.5 H174"/>
<path d="M188 72.5 H196 L201 77.5 V90 L196 95 H188 L183 90 V77.5 Z"/>
</g>
<g fill="none" stroke="#f47a20" stroke-width="4.8" stroke-linejoin="miter">
<path d="M230 72.5 H216 L211.5 77 L216 82 H225.5 L230 87 L225.5 93 H210"/>
<path d="M258 72.5 H240 L235.5 77.5 V90 L240 95 H258"/>
<path d="M265.5 69 V95.5"/>
</g></svg>
  <div class="t tx" style="left:737px;top:628px;letter-spacing:0.5px">mhs_logo.png</div>
  <div class="a btn" style="left:736px;top:670px;width:86px">View</div>
  <div class="a btn" style="left:838px;top:670px;width:144px">Download</div>
  <div class="a" style="left:442px;top:742px;width:1893px;height:2px;background:#4b5563"></div>
  <div class="t tx" style="left:441px;top:775px">Replace Logo</div>
  <div class="a" style="left:442px;top:817px;width:1893px;height:74px;border:2px solid #4b5563;border-radius:8px"></div>
  <div class="t tx" style="left:461px;top:840px;letter-spacing:0.25px">Choose File No file chosen</div>
  <div class="t hp" style="left:441px;top:903px">Upload a new image to replace the current logo.</div>
  <div class="a cb" style="left:442px;top:963px"></div>
  <div class="t tx" style="left:483px;top:962px">Remove logo</div>

  <div class="a" style="left:417px;top:1055px;width:1943px;height:2px;background:#374151"></div>
  <div class="t lbl" style="left:417px;top:1094px;letter-spacing:0.7px">Authentication Methods</div>
  <div class="t hp" style="left:417px;top:1148px">Select which authentication methods are available for users in this workspace. At least one method must remain enabled. You cannot disable your own authentication</div>
  <div class="t hp" style="left:417px;top:1180px;letter-spacing:0.17px">method - to remove it, first change your authentication method in your profile.</div>
  <div class="a" style="left:417px;top:1225px;width:1943px;height:481px;background:#374151;border:2px solid #4b5563;border-radius:8px"></div>
  <div class="a cb dis" style="left:442px;top:1257px"><svg width="26" height="26" viewBox="0 0 26 26"><path d="M6 13.5 L10.5 18 L20 7.5" fill="none" stroke="#2e323a" stroke-width="3.6"/></svg></div>
  <div class="t tx" style="left:485px;top:1256px">Trust</div>
  <div class="t hp" style="left:567px;top:1258px;color:#facc15;letter-spacing:0.2px">(your current method)</div>
  <div class="a cb on lt" style="left:442px;top:1313px"><svg width="26" height="26" viewBox="0 0 26 26"><path d="M6 13.5 L10.5 18 L20 7.5" fill="none" stroke="#333" stroke-width="3.6"/></svg></div>
  <div class="t tx" style="left:485px;top:1312px">Password</div>
  <div class="a cb on" style="left:442px;top:1369px"><svg width="26" height="26" viewBox="0 0 26 26"><path d="M6 13.5 L10.5 18 L20 7.5" fill="none" stroke="#2b2b2b" stroke-width="3.6"/></svg></div>
  <div class="t tx" style="left:485px;top:1368px;letter-spacing:0.25px">Email Verification</div>
  <div class="a cb on" style="left:442px;top:1425px"><svg width="26" height="26" viewBox="0 0 26 26"><path d="M6 13.5 L10.5 18 L20 7.5" fill="none" stroke="#2b2b2b" stroke-width="3.6"/></svg></div>
  <div class="t tx" style="left:485px;top:1424px">Google</div>
  <div class="a cb" style="left:442px;top:1481px"></div>
  <div class="t tx" style="left:485px;top:1480px;letter-spacing:0.8px">Microsoft</div>
  <div class="a cb" style="left:442px;top:1537px"></div>
  <div class="t tx" style="left:485px;top:1536px">Clever</div>
  <div class="a cb" style="left:442px;top:1593px"></div>
  <div class="t tx" style="left:485px;top:1592px">Classlink</div>
  <div class="a cb" style="left:442px;top:1649px"></div>
  <div class="t tx" style="left:485px;top:1648px;letter-spacing:0.4px">Schoology</div>

  <div class="a" style="left:417px;top:1741px;width:1943px;height:2px;background:#374151"></div>
  <div class="t lbl" style="left:417px;top:1780px;letter-spacing:0.25px">Mission HydroSci — Member Authorization</div>
  <div class="t hp" style="left:417px;top:1834px">Choose what is required when a member changes their unit or clears downloads in Mission HydroSci. This setting does not affect leaders, admins, or coordinators.</div>
  <div class="a" style="left:417px;top:1879px;width:1943px;height:300px;background:#374151;border:2px solid #4b5563;border-radius:8px"></div>
  <div class="a rd on" style="left:442px;top:1911px"></div>
  <div class="t tx" style="left:485px;top:1910px;letter-spacing:0.6px">Staff Auth</div>
  <div class="t hp" style="left:631px;top:1913px">(a leader/admin must authenticate on the device)</div>
  <div class="a rd" style="left:442px;top:1967px"></div>
  <div class="t tx" style="left:485px;top:1967px">Keyword</div>
  <div class="t hp" style="left:613px;top:1970px">(member must enter a keyword)</div>
  <div class="a rd" style="left:442px;top:2023px"></div>
  <div class="t tx" style="left:485px;top:2022px">Trust</div>
  <div class="t hp" style="left:567px;top:2025px">(member only confirms via dialog)</div>
  </div></div>
</div>
</body></html>
